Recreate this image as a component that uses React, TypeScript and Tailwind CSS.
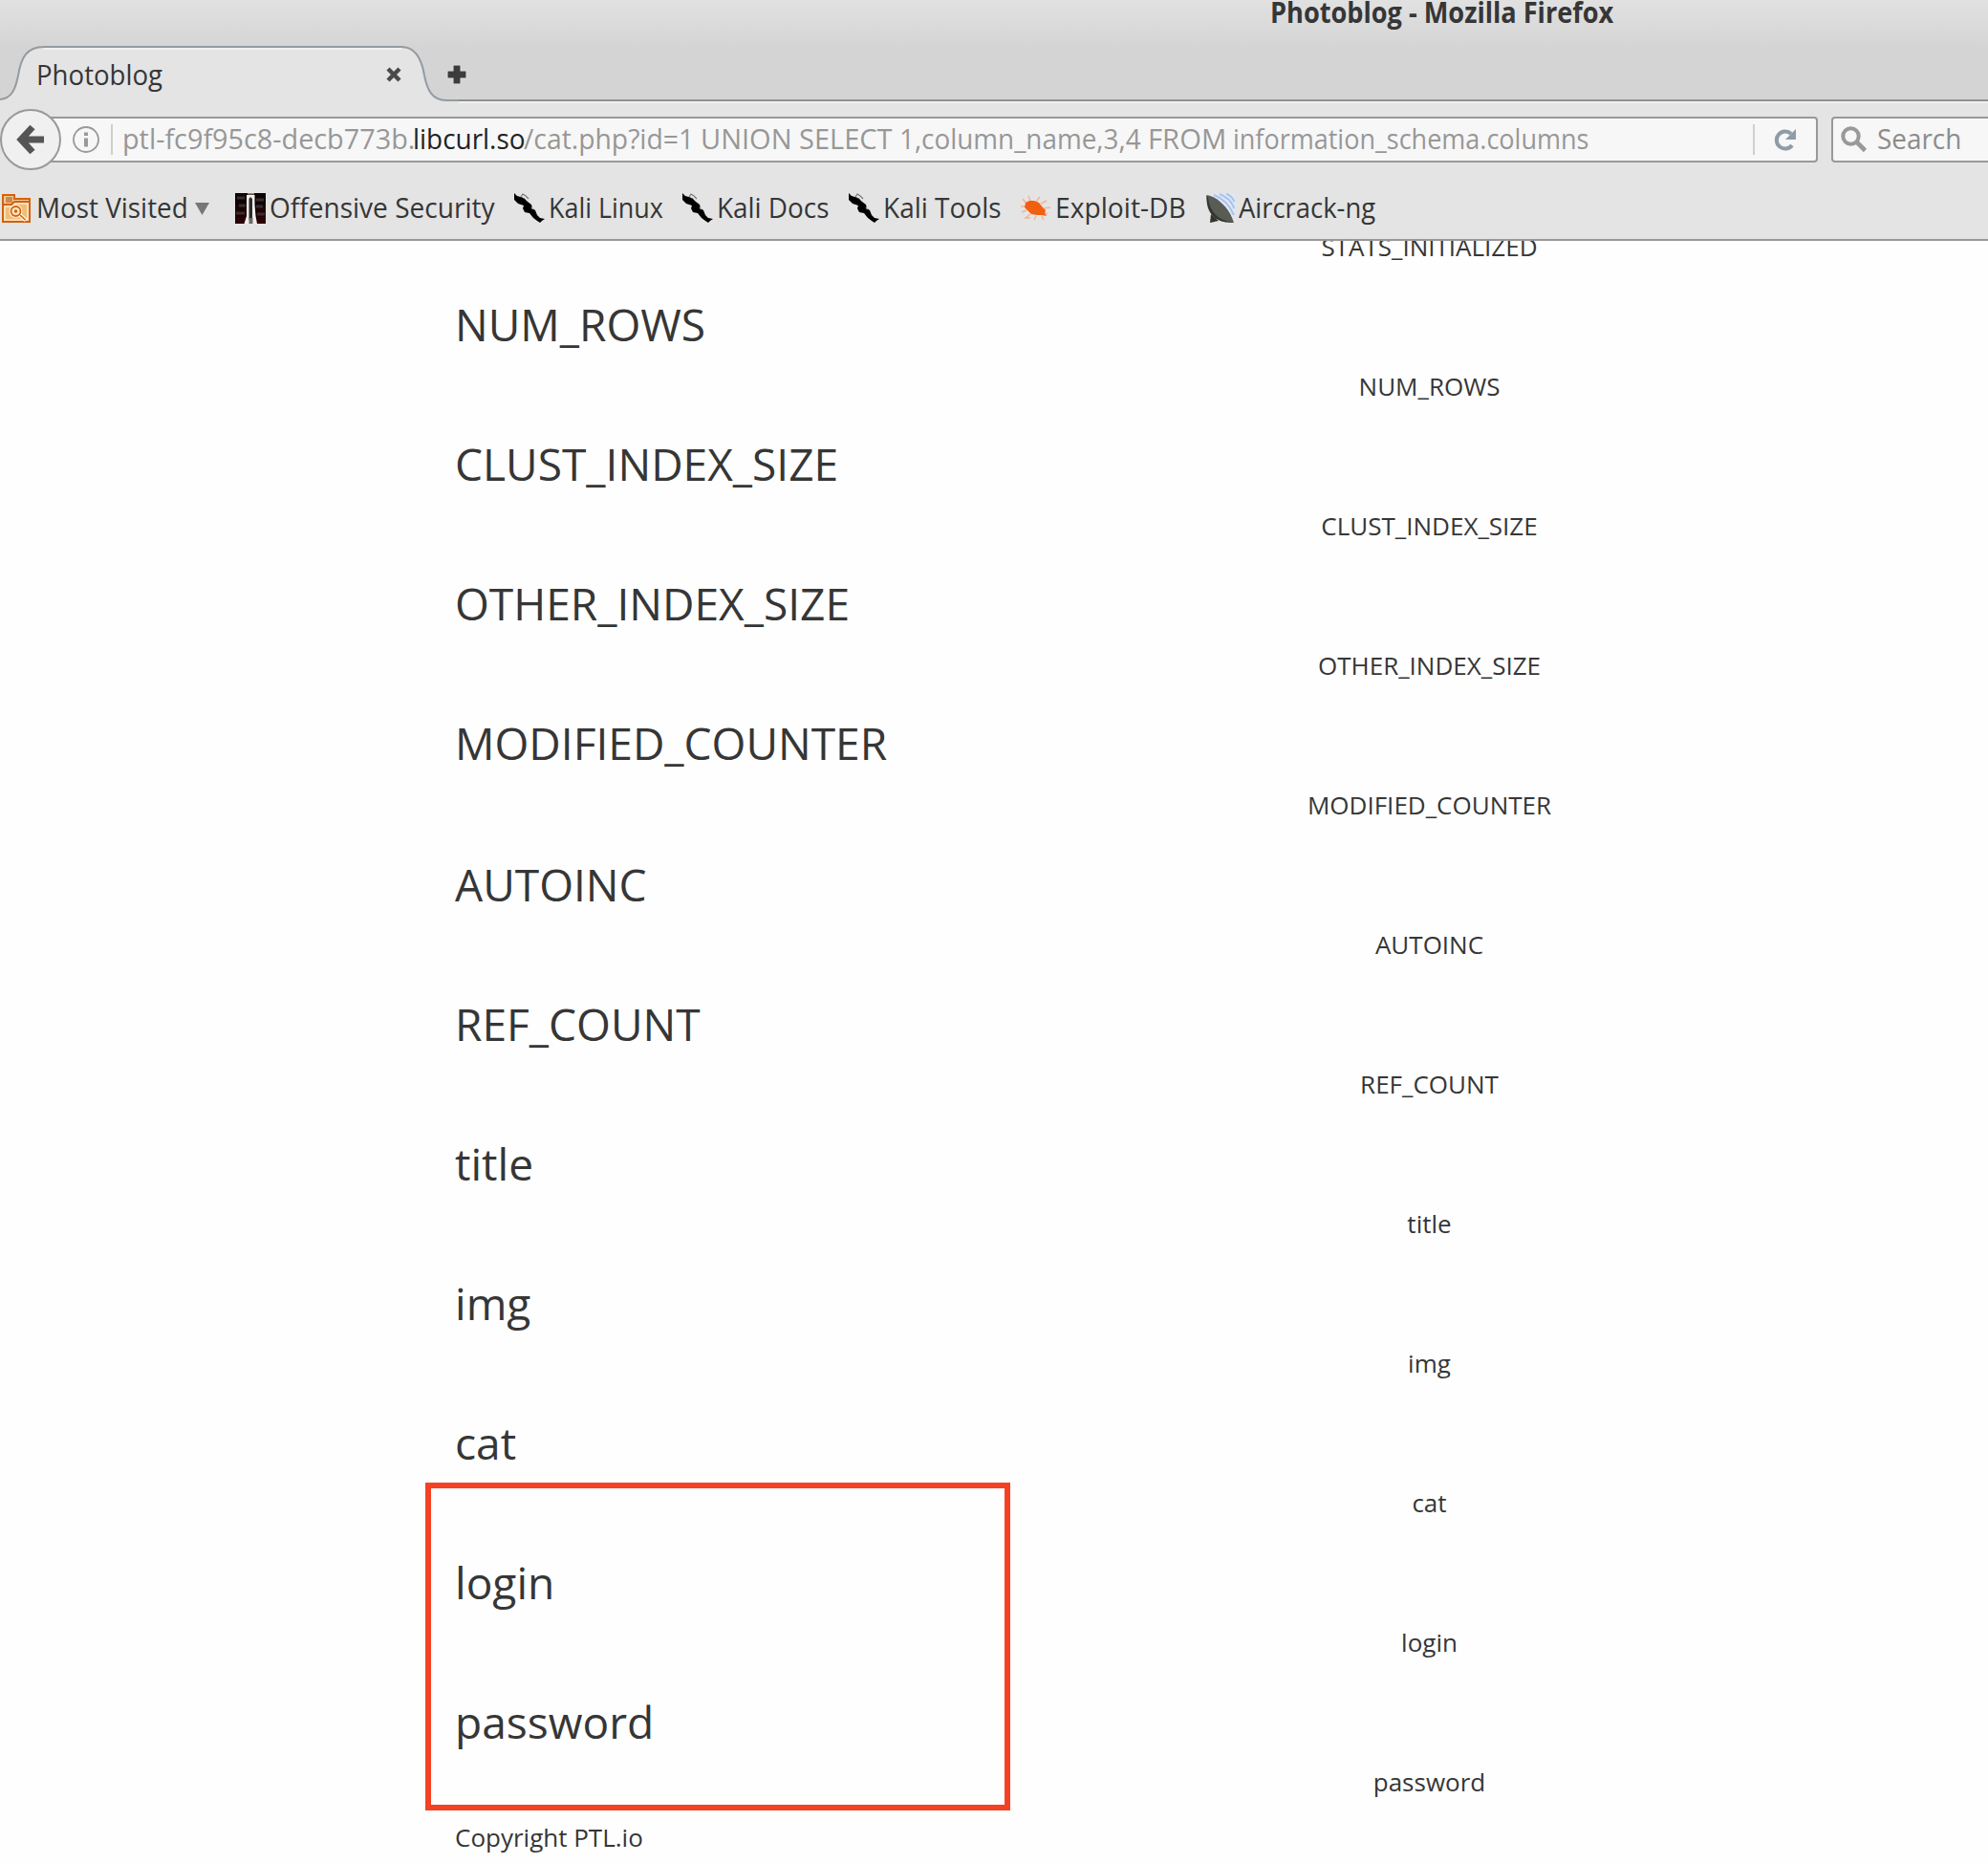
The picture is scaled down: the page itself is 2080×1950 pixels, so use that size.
import React from "react";

const columns = [
  "NUM_ROWS",
  "CLUST_INDEX_SIZE",
  "OTHER_INDEX_SIZE",
  "MODIFIED_COUNTER",
  "AUTOINC",
  "REF_COUNT",
  "title",
  "img",
  "cat",
  "login",
  "password",
];

/* Narrowed label: `slot` reserves the width, `fit` condenses the glyphs. */
function Label({ slot, fit, children }: { slot: string; fit: string; children: string }) {
  return (
    <span className={`block shrink-0 ${slot}`}>
      <span className={`inline-block origin-left whitespace-pre ${fit}`}>{children}</span>
    </span>
  );
}

function TabShape() {
  return (
    <svg className="absolute left-0 top-0" width="480" height="60" viewBox="0 0 480 60" fill="none">
      <path
        d="M0 56 C12 55 16 46 19 31 C22 12 28 1 46 1 H420 C434 1 441 12 444 31 C447 46 452 57 467 57 H480 V60 H0Z"
        fill="#e4e4e4"
      />
      <path d="M46 3 H420" stroke="#f0f0f0" strokeWidth="2" />
      <path
        d="M0 56 C12 55 16 46 19 31 C22 12 28 1 46 1 H420 C434 1 441 12 444 31 C447 46 452 57 467 57 H480"
        stroke="#949ba2"
        strokeWidth="2"
      />
    </svg>
  );
}

function FolderIcon() {
  return (
    <svg width="30" height="30" viewBox="0 0 30 30" className="shrink-0">
      <path d="M1 1 H13 V5 H29 V29 H1Z" fill="#f3c99a" stroke="#d2620c" strokeWidth="2" />
      <path d="M4 3 H11 V9 H4Z" fill="#cf8a4b" />
      <path d="M2 11 H10 L13 8 H28" fill="none" stroke="#d2620c" strokeWidth="2" />
      <path d="M3 13 H11 L14 10 H27 V27 H3Z" fill="#f0bd76" stroke="#fbe8cf" strokeWidth="1.6" />
      <circle cx="14.5" cy="18" r="5" fill="none" stroke="#fff3e2" strokeWidth="4" />
      <circle cx="14.5" cy="18" r="5" fill="#fbe3c4" stroke="#d2620c" strokeWidth="1.8" />
      <circle cx="14.5" cy="18" r="1.8" fill="#d2620c" />
      <path d="M19 22 L25 27.5" stroke="#fff3e2" strokeWidth="4" />
      <path d="M19 22 L24.5 27" stroke="#d2620c" strokeWidth="1.6" />
    </svg>
  );
}

function OffsecIcon() {
  return (
    <svg width="32" height="32" viewBox="0 0 32 32" className="shrink-0">
      <rect width="32" height="32" fill="#1c0304" />
      <rect width="32" height="12" fill="#0d0505" />
      <path d="M2 5h8M4 13h7M1 21h9M22 7h8M22 14h7M23 22h8" stroke="#3a2e2f" strokeWidth="3" />
      <path d="M0 25h11v7H0zM23 25h9v7h-9z" fill="#2c0304" />
      <path d="M12 2 H20.5 V12 L21.5 24 L23 32 H9.5 L12 24Z" fill="#f3efec" />
      <path d="M14.5 6 L16 4 L18 6 V28 H14.5Z" fill="#2b2b2d" />
      <path d="M14.5 26h4v6h-4z" fill="#6d6d70" />
      <path d="M13 0.8h7" stroke="#a0816a" strokeWidth="1.6" />
    </svg>
  );
}

function KaliIcon() {
  return (
    <svg width="32" height="32" viewBox="0 0 32 32" className="shrink-0">
      <path
        d="M0 0 L3 3 L10 5 L14 9 L18 12 L19 16 L22 18 L24 23 L27 26 L32 27 L29 29 L27 31 L24 29 L20 26 L16 21 L11 20 L9 16 L10 13 L4 11 L0 7Z"
        fill="#000"
      />
      <path d="M7 4 L9 1 L12 3 L15 6" fill="none" stroke="#777" strokeWidth="1.2" />
      <path d="M9 5 L11 4 L14 8" fill="none" stroke="#e4e4e4" strokeWidth="1.2" />
      <path d="M18 15 L20 17" stroke="#aaa" strokeWidth="1.5" />
    </svg>
  );
}

function ExploitIcon() {
  return (
    <svg width="32" height="28" viewBox="0 0 32 28" className="shrink-0">
      <path
        d="M6 9 L2 4 M10 6 L8 1 M16 7 L20 2 M5 12 L0 12 M6 16 L1 18 M10 20 L5 24 M16 22 L14 26 M22 22 L24 26 M24 14 L31 13 M21 9 L27 6 M10 24 L4 24 M25 19 L28 20"
        stroke="#f2b394"
        strokeWidth="1.4"
        fill="none"
      />
      <path
        d="M5 8 L9 6 L14 6 L19 8 L23 13 L26 16 L25 19 L27 22 L22 21 L17 21 L11 20 L7 16 L4 13Z"
        fill="#f0600f"
      />
    </svg>
  );
}

function AircrackIcon() {
  return (
    <svg width="30" height="32" viewBox="0 0 30 32" className="shrink-0">
      <path d="M4 1 L30 0 V25Z" fill="#dfe8f6" />
      <path d="M8 2 Q22 7 29 23 M14 1 Q25 5 29.5 16 M21 0.5 Q27 3 29.5 9" fill="none" stroke="#a9c1ec" strokeWidth="2" />
      <path d="M5 22 L4 31 L13 29Z" fill="#35322b" />
      <path d="M0.5 2 C10 3 24 14 29 31 C14 31 1 24 0.5 2Z" fill="#585c55" />
      <path d="M2 5 C4 21 14 29 28 30.5 C14 31.5 -1 25 0.5 2Z" fill="#34372f" />
    </svg>
  );
}

export default function App() {
  return (
    <div className="relative h-[1950px] w-[2080px] overflow-hidden bg-[#fefefe] font-['Open_Sans',sans-serif] text-[#363636]">
      <header className="h-[252px] border-b-2 border-[#999] bg-[#e4e4e4] text-[30px] leading-10">
        <div className="h-12 bg-linear-to-b from-[#e1e1e1] to-[#d5d5d5] pl-[1329px]">
          <div className="font-bold leading-[26px]">
            <Label slot="w-[360px]" fit="scale-x-[.905]">Photoblog - Mozilla Firefox</Label>
          </div>
        </div>

        <div className="relative flex h-[60px] items-center bg-[#d4d4d4]">
          <div className="absolute inset-x-0 bottom-0 h-1 border-t-2 border-[#909090] bg-[#f0f0f0]" />
          <TabShape />
          <div className="relative flex items-center pl-[38px]">
            <span className="-mt-px">
              <Label slot="w-[366px]" fit="scale-x-[.92]">Photoblog</Label>
            </span>
            <svg width="16" height="16" viewBox="0 0 16 16">
              <path d="M2 2 L14 14 M14 2 L2 14" stroke="#4a4a4a" strokeWidth="4.4" />
            </svg>
            <svg width="24" height="24" viewBox="0 0 24 24" className="ml-[46px]">
              <path d="M8.5 2.5h7v6h6v7h-6v6h-7v-6h-6v-7h6z" fill="#3c3c3c" stroke="#e6e6e6" strokeWidth="1.5" paintOrder="stroke" />
            </svg>
          </div>
        </div>

        <div className="flex h-[76px] items-center">
          <svg width="64" height="64" viewBox="0 0 64 64" className="relative z-10 shrink-0">
            <circle cx="32" cy="32" r="31" fill="#f0f0f0" stroke="#999" strokeWidth="2" />
            <path d="M34 19 L22 32 L34 45 M23 32 H46" fill="none" stroke="#555" strokeWidth="7" />
          </svg>
          <div className="-ml-3 flex h-12 w-[1850px] shrink-0 items-center rounded-r border-2 border-[#999] bg-[#f7f7f7] pl-[22px] text-[#979797]">
            <svg width="28" height="28" viewBox="0 0 28 28" className="shrink-0">
              <circle cx="14" cy="14" r="13" fill="none" stroke="#999" strokeWidth="1.8" />
              <path d="M12 6.5h4v3.5h-4z M12 12.5h4v9h-4z" fill="#999" />
            </svg>
            <div className="ml-3 h-8 w-0.5 shrink-0 bg-[#cfcfcf]" />
            <div className="-mt-0.5 ml-[10px] flex">
              <Label slot="w-[304px]" fit="scale-x-[.96]">ptl-fc9f95c8-decb773b.</Label>
              <span className="text-[#222]">
                <Label slot="w-[116px]" fit="scale-x-[.93]">libcurl.so</Label>
              </span>
              <Label slot="w-[185px]" fit="scale-x-[.943]">/cat.php?id=1 </Label>
              <Label slot="w-[208px]" fit="scale-x-[.967]">UNION SELECT </Label>
              <Label slot="w-[260px]" fit="scale-x-[.928]">1,column_name,3,4 </Label>
              <Label slot="w-[89px]" fit="scale-x-[.975]">FROM </Label>
              <Label slot="w-[544px]" fit="scale-x-[.9]">information_schema.columns</Label>
            </div>
            <div className="h-8 w-0.5 shrink-0 bg-[#cfcfcf]" />
            <svg width="24" height="24" viewBox="0 0 24 24" className="ml-5 shrink-0">
              <path d="M19 18 A9 9 0 1 1 18 6" fill="none" stroke="#8e9ba8" strokeWidth="4" />
              <path d="M23 1 V12 H12Z" fill="#8e9ba8" />
            </svg>
          </div>
          <div className="ml-[14px] flex h-12 w-[200px] shrink-0 items-center rounded-l border-2 border-[#999] bg-[#f7f7f7] pl-2 text-[#8c8c8c]">
            <svg width="28" height="28" viewBox="0 0 28 28" className="shrink-0">
              <circle cx="10.5" cy="10.5" r="8.2" fill="none" stroke="#999" strokeWidth="4" />
              <path d="M16.5 16.5 L25.5 25.5" stroke="#999" strokeWidth="4.6" />
            </svg>
            <span className="-mt-0.5 ml-[10px]">
              <Label slot="w-[90px]" fit="scale-x-[.93]">Search</Label>
            </span>
          </div>
        </div>

        <nav className="flex h-[66px] items-center pl-0.5 [&>svg]:mt-0.5">
          <FolderIcon />
          <div className="w-1.5" />
          <Label slot="w-[166px]" fit="scale-x-[.928]">Most Visited</Label>
          <svg width="15" height="13" viewBox="0 0 15 13" className="shrink-0">
            <path d="M0 0 H15 L7.5 13Z" fill="#777" />
          </svg>
          <div className="w-[27px]" />
          <OffsecIcon />
          <div className="w-1" />
          <Label slot="w-[256px]" fit="scale-x-[.935]">Offensive Security</Label>
          <KaliIcon />
          <div className="w-1" />
          <Label slot="w-[140px]" fit="scale-x-[.896]">Kali Linux</Label>
          <KaliIcon />
          <div className="w-1" />
          <Label slot="w-[138px]" fit="scale-x-[.929]">Kali Docs</Label>
          <KaliIcon />
          <div className="w-1" />
          <Label slot="w-[144px]" fit="scale-x-[.933]">Kali Tools</Label>
          <ExploitIcon />
          <div className="w-1" />
          <Label slot="w-[158px]" fit="scale-x-[.94]">Exploit-DB</Label>
          <AircrackIcon />
          <div className="w-1" />
          <Label slot="w-[160px]" fit="scale-x-[.914]">Aircrack-ng</Label>
        </nav>
      </header>

      <main className="h-[1698px] overflow-hidden pl-[476px]">
        <p className="-mt-[14px] w-[2039px] text-center text-[26px] leading-10">STATS_INITIALIZED</p>
        {columns.map((name, i) => (
          <section key={name} className="h-[146px] pt-[33px]">
            <h2 className={`h-[60px] text-[46.1px] leading-[60px] ${i >= 4 ? "translate-y-px" : "-translate-y-px"}`}>{name}</h2>
            <p className="mt-[13px] w-[2039px] text-center text-[26px] leading-10">{name}</p>
          </section>
        ))}
        <footer className="pt-[18px] text-[26px] leading-10">Copyright PTL.io</footer>
      </main>

      <div className="absolute left-[445px] top-[1551px] h-[343px] w-[612px] border-[6px] border-[#f54123]" />
    </div>
  );
}
